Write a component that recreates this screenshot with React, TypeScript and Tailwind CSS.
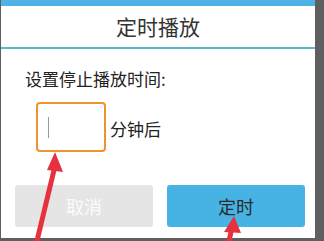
export default function App() {
  const font = { fontFamily: '"Noto Sans CJK SC", "Noto Sans", sans-serif' };
  return (
    <div className="relative w-[324px] h-[241px] overflow-hidden bg-[#5f5f5f]" style={font}>
      <div className="ml-[1px] w-[314px] h-[238px] bg-white flex flex-col">
        <div className="h-[6px] bg-[#4db3e6]" />
        <div className="h-[41px] flex items-center justify-center text-[21px] text-[#333]">
          定时播放
        </div>
        <div className="h-[2px] bg-[#5cb6cb]" />
        <div className="pl-[24px] pt-[19px] text-[17px] leading-[22px] text-[#222]">
          设置停止播放时间:
        </div>
        <div className="flex items-center pl-[35px] mt-[12px]">
          <div className="w-[70px] h-[50px] rounded-[4px] border-2 border-[#f0922e] flex items-center pl-[10px]">
            <div className="w-px h-[21px] bg-[#999]" />
          </div>
          <span className="ml-[4px] mt-[4px] text-[17px] text-[#222]">分钟后</span>
        </div>
        <div className="flex gap-[14px] pl-[14px] mt-[33px]">
          <div className="w-[138px] h-[42px] rounded-[3px] bg-[#e5e5e5] flex items-center justify-center text-[18px] text-[#fafafa]">
            取消
          </div>
          <div className="w-[138px] h-[42px] rounded-[3px] bg-[#47b3e4] flex items-center justify-center text-[18px] text-[#2a2a2a]">
            定时
          </div>
        </div>
      </div>
      <svg className="absolute left-0 top-0" width="324" height="241" viewBox="0 0 324 241">
        <line x1="36" y1="245" x2="55" y2="166" stroke="#e6323e" strokeWidth="5" />
        <polygon points="55,152 47,170 63,172" fill="#e6323e" />
        <line x1="228" y1="245" x2="232" y2="228" stroke="#e6323e" strokeWidth="5" />
        <polygon points="234,216 224,232 241,233" fill="#e6323e" />
      </svg>
    </div>
  );
}
